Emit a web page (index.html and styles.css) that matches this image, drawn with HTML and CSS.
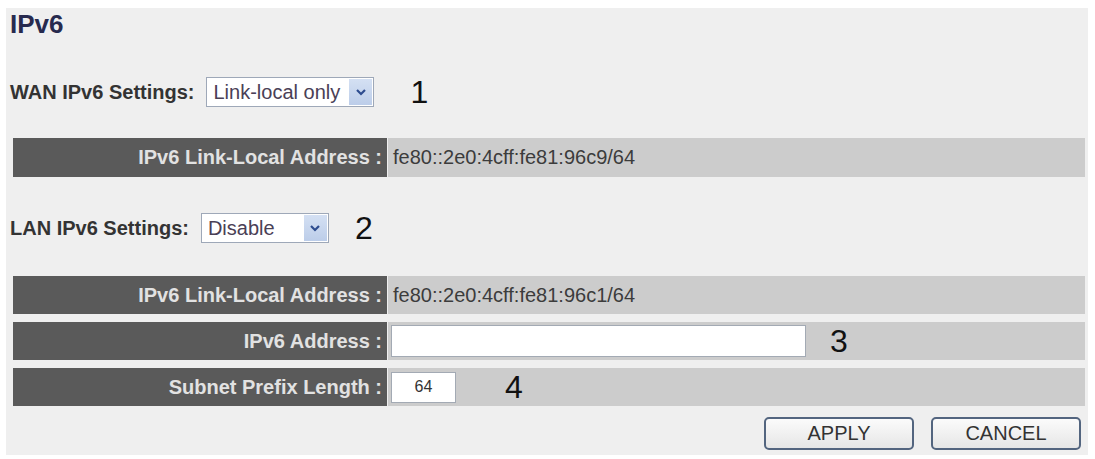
FILE: index.html
```html
<!DOCTYPE html>
<html>
<head>
<meta charset="utf-8">
<link rel="stylesheet" href="styles.css">
</head>
<body>
<div class="panel">
  <h1 class="title">IPv6</h1>

  <div class="setting wan">
    <span class="setting-label">WAN IPv6 Settings:</span>
    <div class="select select-wan">
      <span class="select-text">Link-local only</span>
      <span class="select-arrow"><svg width="12" height="8" viewBox="0 0 12 8"><path d="M2 2 L6 6 L10 2" fill="none" stroke="#2d4c8f" stroke-width="2.2"/></svg></span>
    </div>
    <span class="marker m1">1</span>
  </div>

  <div class="grid single">
    <div class="key">IPv6 Link-Local Address :</div>
    <div class="val">fe80::2e0:4cff:fe81:96c9/64</div>
  </div>

  <div class="setting lan">
    <span class="setting-label">LAN IPv6 Settings:</span>
    <div class="select select-lan">
      <span class="select-text">Disable</span>
      <span class="select-arrow"><svg width="12" height="8" viewBox="0 0 12 8"><path d="M2 2 L6 6 L10 2" fill="none" stroke="#2d4c8f" stroke-width="2.2"/></svg></span>
    </div>
    <span class="marker m2">2</span>
  </div>

  <div class="grid multi">
    <div class="key">IPv6 Link-Local Address :</div>
    <div class="val">fe80::2e0:4cff:fe81:96c1/64</div>

    <div class="key">IPv6 Address :</div>
    <div class="val field">
      <input class="input input-addr" type="text" value="">
      <span class="marker m3">3</span>
    </div>

    <div class="key">Subnet Prefix Length :</div>
    <div class="val field">
      <input class="input input-prefix" type="text" value="64">
      <span class="marker m4">4</span>
    </div>
  </div>

  <div class="actions">
    <button class="btn">APPLY</button>
    <button class="btn">CANCEL</button>
  </div>
</div>
</body>
</html>
```

FILE: styles.css
```css
html, body {
  margin: 0;
  padding: 0;
  background: #ffffff;
}

body {
  font-family: "Liberation Sans", Arial, sans-serif;
  color: #333333;
}

.panel {
  margin: 8px 7px 0 6px;
  height: 447px;
  box-sizing: border-box;
  background: #efefef;
  padding: 3px 3px 0 4px;
}

.title {
  margin: 0;
  font-size: 26px;
  line-height: 26px;
  font-weight: bold;
  color: #272a4e;
}

.setting {
  display: flex;
  align-items: center;
  height: 30px;
}

.wan {
  margin-top: 40px;
}

.lan {
  margin-top: 36px;
}

.setting-label {
  font-size: 20px;
  font-weight: bold;
  color: #333333;
}

.select {
  display: flex;
  align-items: stretch;
  box-sizing: border-box;
  height: 30px;
  margin-left: 12px;
  border: 1px solid #9ea8b8;
  background: #ffffff;
  padding: 1px;
}

.select-wan { width: 168px; }
.select-lan { width: 128px; }

.select-text {
  flex: 1;
  font-size: 20px;
  line-height: 26px;
  padding-left: 5px;
  color: #4a4056;
}

.select-arrow {
  width: 23px;
  display: flex;
  align-items: center;
  justify-content: center;
  background: linear-gradient(#d4e0f3, #bccde9);
}

.marker {
  font-size: 32px;
  line-height: 30px;
  color: #111111;
}

.m1 { margin-left: 36px; }
.m2 { margin-left: 26px; }
.m3 { margin-left: 24px; }
.m4 { margin-left: 49px; }

.grid {
  display: grid;
  grid-template-columns: 374px 1fr;
  column-gap: 1px;
  margin-left: 3px;
}

.single {
  margin-top: 31px;
  grid-auto-rows: 39px;
}

.multi {
  margin-top: 33px;
  grid-auto-rows: 38px;
  row-gap: 8px;
}

.key {
  background: #5a5a5a;
  color: #e2e2e2;
  font-size: 20px;
  font-weight: bold;
  text-align: right;
  padding-right: 5px;
  display: flex;
  align-items: center;
  justify-content: flex-end;
}

.val {
  background: #cccccc;
  color: #3c3c3c;
  font-size: 20px;
  padding-left: 5px;
  display: flex;
  align-items: center;
}

.field {
  padding-left: 3px;
}

.input {
  box-sizing: border-box;
  height: 32px;
  border: 1px solid #a3aab4;
  background: #ffffff;
  font-family: "Liberation Sans", Arial, sans-serif;
  font-size: 16px;
  color: #333333;
  margin: 0;
  padding: 0;
  outline: none;
}

.input-addr { width: 415px; }
.input-prefix {
  width: 65px;
  height: 31px;
  text-align: center;
}

.actions {
  display: flex;
  justify-content: flex-end;
  gap: 17px;
  margin-top: 11px;
  padding-right: 4px;
}

.btn {
  box-sizing: border-box;
  width: 150px;
  height: 33px;
  border: 2px solid #53657f;
  border-radius: 5px;
  background: linear-gradient(#fbfbfb, #e6e6e6);
  font-family: "Liberation Sans", Arial, sans-serif;
  font-size: 20px;
  color: #333333;
  padding: 0;
}
```
